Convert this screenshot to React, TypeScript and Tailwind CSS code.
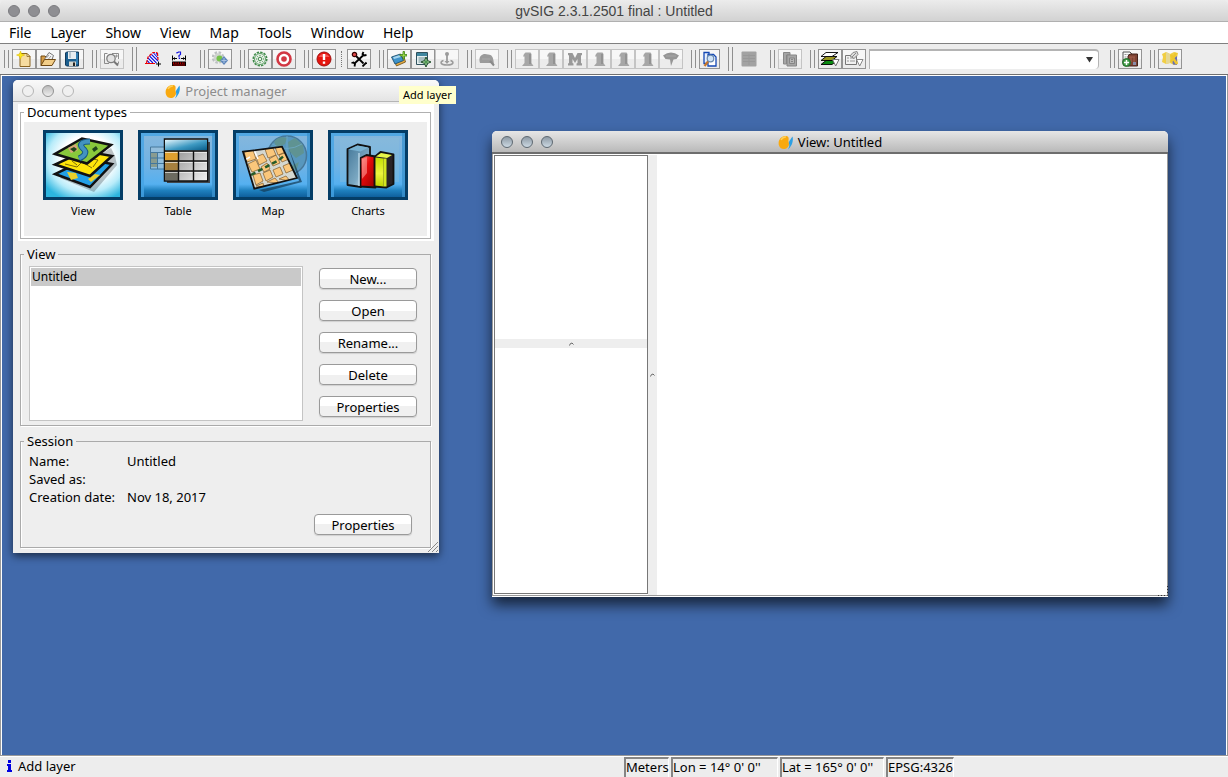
import React from 'react';

const MENUS = ['File', 'Layer', 'Show', 'View', 'Map', 'Tools', 'Window', 'Help'];

const Icon = ({ children }: { children: React.ReactNode }) => (
    <svg width="16" height="16" viewBox="0 0 16 16" fill="none" aria-hidden="true">{children}</svg>
);

/* ---------- toolbar icons ---------- */

const NewIcon = () => (
    <Icon>
        <path d="M4 2.500h7l3 3v10H4z" fill="#f6dca0" stroke="#8a6420" />
        <path d="M11 2.500v3h3z" fill="#fff3cf" stroke="#8a6420" strokeWidth=".8" />
        <path d="M4.500 0l1 3 3.200 1-3.200 1.200-1 3-1-3L.5 4l3-1z" fill="#ffe817" stroke="#d9b800" strokeWidth=".5" />
    </Icon>
);

const OpenIcon = () => (
    <Icon>
        <path d="M1 14.500V5h4l1.500 1.500H12V14z" fill="#d69c45" stroke="#6f4813" />
        <path d="M4 9l5-7.500 4.500 3L11 11z" fill="#f4f4f4" stroke="#666" strokeWidth=".9" />
        <path d="M6.500 7l2.500-3M8.500 8l2.500-3" stroke="#888" strokeWidth=".8" />
        <path d="M1 14.500l3.500-6H15.500l-3.500 6z" fill="#f3ce88" stroke="#6f4813" />
    </Icon>
);

const SaveIcon = () => (
    <Icon>
        <path d="M1.500 2l1-1h12v14h-12l-1-1z" fill="#1c5f8f" stroke="#123a5c" />
        <path d="M4 1h8v7H4z" fill="#e7edf2" />
        <path d="M5 1h2v6H5z" fill="#b8c6d0" />
        <path d="M5 10.500h7V15H5z" fill="#d7d7cf" />
        <path d="M9 11.500h2V15H9z" fill="#222" />
        <path d="M13 2v11" stroke="#48a0da" />
    </Icon>
);

const ZoomFrameIcon = () => (
    <Icon>
        <path d="M5 12.500H.5v-10h3M8 2.500h6.500V8M14.500 10.500v2H12" stroke="#8c8c8c" />
        <circle cx="7" cy="7.500" r="4.200" fill="#e3e3e3" stroke="#7f7f7f" strokeWidth="1.300" />
        <path d="M10 10.500l4 4" stroke="#777" strokeWidth="2" />
        <path d="M11 5h3M12.500 3.500v3" stroke="#999" />
    </Icon>
);

const AreaIcon = () => (
    <Icon>
        <path d="M1.500 12L3 6l5-4.500h4.500L13.500 12z" fill="#fff" />
        <path d="M2 9.500L4.500 12M3 7l5 5M4.500 5l7 7M6.500 3.500l6.500 6.500M8.500 2l4.500 5M11 2l1.500 2" stroke="#1212dd" strokeWidth="1.100" />
        <path d="M1.500 12L3 6l5-4.500h4.500M12.500 2L13 9" stroke="#e00" strokeWidth="1.200" strokeDasharray="3 1" />
        <path d="M0 12.500h10" stroke="#e00" />
        <path d="M13.500 10.500v5M11 13h5" stroke="#000" />
    </Icon>
);

const DistanceIcon = () => (
    <Icon>
        <path d="M6 2.500V1.500h1L7.500 1h2v2.500L8 4.500V6M7.500 7h1v1" stroke="#1515e0" strokeWidth="1.200" />
        <path d="M1.500 4.500v5M14.500 4.500v5M2 7.500h4M10 7.500h4" stroke="#000" />
        <path d="M2 7.500l2-1.500v3zM14 7.500L12 6v3z" fill="#000" />
        <path d="M1 10.500h14V15H1z" fill="#000" />
        <path d="M2 12.200h12" stroke="#f00000" strokeWidth="1.300" strokeDasharray="1.300 1" />
        <path d="M2 14h12" stroke="#a00" />
    </Icon>
);

const GearNavIcon = () => (
    <Icon>
        <circle cx="6" cy="6.500" r="5" stroke="#bcc0c2" strokeWidth="2.500" strokeDasharray="2.400 1.520" />
        <circle cx="6" cy="6.500" r="4.200" fill="#cfd3cf" />
        <circle cx="7.500" cy="7.500" r="3" fill="#74c24a" />
        <path d="M12 5l4 4.500-4 4.500-4-4.500z" fill="#5e86bb" />
        <path d="M12 7v5M9.500 9.500h5" stroke="#a9c2e2" />
    </Icon>
);

const GreenGearIcon = () => (
    <Icon>
        <circle cx="8" cy="8" r="6.800" stroke="#3f8a49" strokeWidth="1.500" strokeDasharray="2.400 1.160" />
        <circle cx="8" cy="8" r="5.500" fill="#e4eee4" stroke="#4c9556" strokeWidth=".9" />
        <circle cx="8" cy="8" r="1.800" fill="#eee" stroke="#3f8a49" />
        <path d="M8 4v1M8 11v1M4 8h1M11 8h1M5.300 5.300l.6.6M10.700 5.300l-.6.6M5.300 10.700l.6-.6M10.700 10.700l-.6-.6" stroke="#3f8a49" />
    </Icon>
);

const TargetIcon = () => (
    <Icon>
        <circle cx="8" cy="8" r="6.500" fill="#fff" stroke="#d23743" strokeWidth="2.600" />
        <circle cx="8" cy="8" r="2.800" fill="#d23743" />
    </Icon>
);

const AlertIcon = () => (
    <Icon>
        <circle cx="8" cy="8" r="7" fill="#e5150e" stroke="#a01010" />
        <path d="M2.500 6a6 5 0 0 1 11 0z" fill="#f77" opacity=".65" />
        <path d="M8 3v6" stroke="#fff" strokeWidth="2.400" />
        <path d="M8 10.500v2.300" stroke="#fff" strokeWidth="2.400" />
    </Icon>
);

const WrenchIcon = () => (
    <Icon>
        <path d="M4 4l8.500 8.500" stroke="#000" strokeWidth="1.800" />
        <path d="M12 4.500L3.500 12.500" stroke="#000" strokeWidth="1.800" />
        <path d="M12.500 1l-1 2 1.500 1.500 2.500-.5M.5 12l2-.5L4 13l-.5 2.500" stroke="#000" strokeWidth="1.800" />
        <circle cx="3.500" cy="3.500" r="2.200" fill="#e04a4a" stroke="#300" strokeWidth="1.200" />
        <path d="M11.500 15.500l4-4" stroke="#000" strokeWidth="1.800" />
    </Icon>
);

const AddLayerIcon = () => (
    <Icon>
        <path d="M3 9l10-3 1.500 5-9 4z" fill="#e8ad43" stroke="#6b4a12" strokeWidth=".8" />
        <path d="M.5 6l9-3 3 6.500-8.500 3.500z" fill="#3e92c9" stroke="#20506f" strokeWidth=".9" />
        <path d="M2 6.300l7-2.300 1 2L3 8z" fill="#a5d5ef" />
        <path d="M12 .5h1.500v3H16V5h-2.500v3H12V5H9V3.500h3z" fill="#a3e04c" stroke="#3f8416" strokeWidth=".8" />
    </Icon>
);

const AddTableIcon = () => (
    <Icon>
        <path d="M1.500 1.500h11v12h-11z" fill="#e5eff0" stroke="#31525e" />
        <path d="M2 2h10v3H2z" fill="#4087a0" />
        <path d="M3.500 7h7M3.500 9h7M3.500 11h7" stroke="#6d8c93" />
        <path d="M11 6l1.500 3.500L16 11l-3.500 1.500L11 16l-1.500-3.500L6 11l3.500-1.500z" fill="#b6dcae" stroke="#1f4d2a" />
        <path d="M11 9v4M9 11h4" stroke="#2c8034" />
    </Icon>
);

const AnchorIcon = () => (
    <Icon>
        <path d="M8 4v7" stroke="#9b9b9b" strokeWidth="1.800" />
        <path d="M4.500 9.500C1 10.500.5 14 8 14s7-3.500 3.500-4.500" stroke="#9b9b9b" strokeWidth="1.500" />
        <circle cx="8" cy="3" r="2" fill="#9b9b9b" />
        <path d="M5.500 10h5L8 13z" fill="#9b9b9b" />
    </Icon>
);

const SearchHatIcon = () => (
    <Icon>
        <path d="M.5 10C0 5 3 3 6 3l3 .5c4 0 5 3 5.500 6l.5 5-3-2.500H1z" fill="#9b9b9b" />
        <path d="M11 10l4 4.500" stroke="#8a8a8a" strokeWidth="2" />
        <path d="M3 8h8" stroke="#ababab" />
    </Icon>
);

const PawnIcon = () => (
    <Icon>
        <path d="M6.500 1.500h5L12.500 3v9l2 3H3l2.500-3V5.500H4L5 3z" fill="#a6a6a6" />
        <path d="M11 3v10" stroke="#929292" strokeWidth="2" />
    </Icon>
);

const CastleIcon = () => (
    <Icon>
        <path d="M1 2h4.500L8 7l2.500-5H15v2l-1 .5V12l1 .5V14.500H9.500v-2l1-.5V8L8 12 5.500 8v4l1 .5v2H1v-2l1-.5V4.500L1 4z" fill="#999" />
    </Icon>
);

const FunnelIcon = () => (
    <Icon>
        <path d="M0 4.500q8-6 16 0L13.500 8l-3 .5L8 15l-1-6.500L2.500 8z" fill="#969696" />
        <path d="M3 5h10" stroke="#a8a8a8" />
    </Icon>
);

const FindPageIcon = () => (
    <Icon>
        <path d="M2 1.500h5v11H2z" fill="#e9f0fc" stroke="#1448b4" strokeWidth="1.300" />
        <path d="M6 3.500h5.500L14 6v9H6z" fill="#fff" stroke="#1448b4" strokeWidth="1.300" />
        <circle cx="8.500" cy="7.500" r="3.300" fill="#cfe3f7" stroke="#6889b0" strokeWidth="1.200" />
        <path d="M6 10.500L2.500 15" stroke="#c7762a" strokeWidth="2.200" />
    </Icon>
);

const GrayTableIcon = () => (
    <Icon>
        <rect x=".5" y=".5" width="15" height="15" rx="1" fill="#a2a2a2" />
        <path d="M2 4.500h12M2 7.500h12M2 10.500h12M8 3v11" stroke="#989898" />
    </Icon>
);

const CopyIcon = () => (
    <Icon>
        <path d="M1.500 1.500H8V4H4.500v9h-3z" fill="#a5a5a5" stroke="#888" />
        <path d="M5 4h9.500v11H5z" fill="#a6a6a6" stroke="#858585" />
        <path d="M7.500 7h5v5.500h-5z" fill="#b5b5b5" stroke="#858585" />
        <path d="M9 8.500h2M9 10.500h2" stroke="#858585" />
    </Icon>
);

const StackIcon = () => (
    <svg width="20" height="18" viewBox="0 0 20 18" aria-hidden="true">
        <path d="M1 14.500l5-4h11l-5 4z" fill="#0a8a12" stroke="#000" strokeWidth=".9" />
        <path d="M1 10.500L6 6.500h11l-5 4z" fill="#97941e" stroke="#000" strokeWidth=".9" />
        <path d="M1 6.500L6 2.500h12l-6 4z" fill="#fff" stroke="#000" strokeWidth=".9" />
        <path d="M12.500 9.500H19L15.700 16z" fill="#fff" stroke="#777" />
    </svg>
);

const FormIcon = () => (
    <svg width="20" height="18" viewBox="0 0 20 18" fill="none" aria-hidden="true">
        <path d="M1.500 5.500h11v9h-11z" fill="#f1f1f1" stroke="#777" />
        <path d="M3 8h2M6 8h5M3 11h2M6 11h5" stroke="#999" />
        <path d="M6 6l3-3.500 4-1 1 3-4 4z" fill="#ddd" stroke="#888" />
        <path d="M8 7l4-4" stroke="#888" />
        <path d="M12.500 9.500H19L15.700 16z" fill="#fff" stroke="#888" />
    </svg>
);

const AddBoxIcon = () => (
    <Icon>
        <path d="M1 1h7l2 2v9H1z" fill="#fafafa" stroke="#555" />
        <path d="M2.500 3.500h2M5.500 3.500h2M2.500 6h2" stroke="#999" />
        <path d="M6 5l2-2h7.500v12H6z" fill="#7e4333" stroke="#44231b" />
        <path d="M7 6h6M9 6v5M12 6v5" stroke="#a5604e" />
        <path d="M11 11h3v3h-3z" fill="#888ca8" />
        <circle cx="4.500" cy="11.500" r="4" fill="#3f9a45" stroke="#226a2a" />
        <path d="M4.500 9v5M2 11.500h5" stroke="#fff" strokeWidth="1.500" />
    </Icon>
);

const MapPieceIcon = () => (
    <Icon>
        <path d="M0 3l4-2 4 2 4-2 4 1-1 5 1 6-4 1-4-2-4 1-4-2 1-5z" fill="#f1ce43" />
        <path d="M4 1l4 2v9l-4 1z" fill="#e5d794" />
        <path d="M10 9l5-4v9l-4-.5z" fill="#6870b5" />
        <path d="M9 4l6 9M14 2l-5 9" stroke="#edc62e" strokeWidth="2.500" />
    </Icon>
);

/* ---------- document type pictures ---------- */

const ViewPicture = () => (
    <svg viewBox="0 0 74 64" className="h-full w-full" aria-hidden="true">
        <defs>
            <radialGradient id="viewGlow" cx=".55" cy=".4" r=".7">
                <stop offset=".5" stopColor="#fff" />
                <stop offset=".75" stopColor="#b8ecfa" />
                <stop offset="1" stopColor="#2cb5df" />
            </radialGradient>
        </defs>
        <path d="M0 0h74v64H0z" fill="url(#viewGlow)" />
        <path d="M14 45l34 14 23-27-2-9-4-8z" fill="#405058" opacity=".35" />
        <path d="M9 41l35 13 22-23-26-5z" fill="#22a0e6" stroke="#111" strokeWidth="2.500" />
        <path d="M21 39l9 1 2 5-7 2zM42 46l7-5 5 1-9 7z" fill="#ead02a" />
        <path d="M9 31.500L44 43l22-20-28-5z" fill="#ffe50a" stroke="#111" strokeWidth="2.500" />
        <path d="M19 31l12 3 5-5 10 6M42 25l10 2-5 7M26 28l5 4" fill="none" stroke="#7c6b0a" />
        <path d="M9 21L41 30.500 65 12 36 5.500z" fill="#89c83c" stroke="#111" strokeWidth="2.500" />
        <path d="M22 15l8-4 2 6-7 3z" fill="#d8a37a" />
        <path d="M44 8.500c-9 0-11 3-7 7 5 4 1 8-4 10" fill="none" stroke="#145785" strokeWidth="6" />
        <path d="M44 8.500c-9 0-11 3-7 7 5 4 1 8-4 10" fill="none" stroke="#4393c0" strokeWidth="4" />
        <path d="M24 16l4-2 3 2-3 3zM46 16l4-3 2 3-4 3z" fill="#20451c" />
    </svg>
);

const BlueGround = ({ id }: { id: string }) => (
    <>
        <defs>
            <linearGradient id={id} x1="0" y1="0" x2="0" y2="1">
                <stop offset="0" stopColor="#86b7dc" />
                <stop offset=".5" stopColor="#70b2e4" />
                <stop offset=".8" stopColor="#55b0f0" />
                <stop offset=".9" stopColor="#1e7fbd" />
                <stop offset="1" stopColor="#0e5f9c" />
            </linearGradient>
        </defs>
        <path d="M0 0h74v64H0z" fill={`url(#${id})`} />
        <path d="M0 0h74v3H0zM0 0h3v64H0z" fill="#45a4e5" opacity=".8" />
        <path d="M71 0h3v64h-3z" fill="#3b93cf" opacity=".8" />
    </>
);

const TablePicture = () => (
    <svg viewBox="0 0 74 64" className="h-full w-full" aria-hidden="true">
        <BlueGround id="tableGround" />
        <defs>
            <linearGradient id="tableHead" x1="0" y1="0" x2="1" y2="1">
                <stop offset="0" stopColor="#e2f4fb" />
                <stop offset=".55" stopColor="#3d99c2" />
                <stop offset="1" stopColor="#075b88" />
            </linearGradient>
            <linearGradient id="tableCell" x1="0" y1="0" x2="1" y2="1">
                <stop offset="0" stopColor="#9c9c9c" />
                <stop offset="1" stopColor="#f0f0f0" />
            </linearGradient>
        </defs>
        <g opacity=".55">
            <path d="M9.500 14h15v22h-15z" fill="#a8c7d9" stroke="#1d4867" />
            <path d="M10 20h6v14h-6z" fill="#9a8a4e" />
            <path d="M10 19.500h14M10 25h14M10 30.500h14M16.500 19v17" stroke="#1d4867" />
        </g>
        <path d="M26 9h43v41H26z" fill="#40464c" />
        <path d="M23.500 6h43v42h-43z" fill="#d5d5d5" stroke="#111" strokeWidth="1.500" />
        <path d="M24 7h42v10.500H24z" fill="url(#tableHead)" />
        <path d="M24 18h13v10H24z" fill="#dfa02f" />
        <path d="M24 28h13v10H24z" fill="#a6803f" />
        <path d="M24 38h13v9H24z" fill="#6c6b60" />
        <path d="M38 18h14v10H38zM38 28h14v10H38zM38 38h14v9H38zM53 18h13v10H53zM53 28h13v10H53zM53 38h13v9H53z" fill="url(#tableCell)" />
        <path d="M24 19.500h42M24 29.500h42M24 39.500h42" stroke="#fff" opacity=".6" />
        <path d="M24 18h43M24 28h43M24 38h43M37.500 18v30M52.500 18v30" stroke="#111" strokeWidth="1.400" />
    </svg>
);

const MapPicture = () => (
    <svg viewBox="0 0 74 64" className="h-full w-full" aria-hidden="true">
        <BlueGround id="mapGround" />
        <circle cx="51" cy="22.500" r="19.500" fill="#5897bd" stroke="#477899" strokeWidth="1.500" />
        <path d="M38 9c4-6 10-5 13-4l-2 6-8 4zM52 9l7-4 8 7 1 8-8 5-7-7zM55 33l8-4-3 9z" fill="#5f9392" />
        <path d="M51 3v38M36 11q15 9 30 0" fill="none" stroke="#6faac7" strokeWidth=".8" />
        <path d="M23 57l40-9-10-32 13 33-38 10z" fill="#123851" opacity=".7" />
        <clipPath id="mapSheet"><path d="M7 18.700l39-5L61 45 18.300 55.700z" /></clipPath>
        <g clipPath="url(#mapSheet)">
            <path d="M0 0h74v64H0z" fill="#d4d7d0" />
            <g fill="#fbc77b" stroke="#8b6838" strokeWidth=".8">
                <path d="M8 19l9-2 3 9-9 3zM20 24l7-3 4 7-8 4zM29 16l8-1 3 7-8 3zM39 14l7-1 3 7-7 2zM12 31l8-4 4 9-8 3zM33 26l7-4 4 8-7 3zM43 22l6-3 4 7-7 3zM25 34l6-4 3 6-6 3zM17 42l7-2 3 8-7 4zM27 40l7-3 3 7-7 4zM37 37l7-3 3 7-7 3zM47 33l7-3 3 7-7 3zM20 53l7-3 1 4zM31 49l8-4 4 5zM43 46l7-3 4 5z" />
            </g>
            <path d="M15 42l28-15 6-5" fill="none" stroke="#255b28" strokeWidth="2.500" strokeDasharray="5 3" />
            <path d="M7 28l7-4M18 17l4 9" stroke="#fff" strokeWidth="1.500" />
        </g>
        <path d="M7 18.700l39-5L61 45 18.300 55.700z" fill="none" stroke="#111" strokeWidth="1.800" />
    </svg>
);

const ChartsPicture = () => (
    <svg viewBox="0 0 74 64" className="h-full w-full" aria-hidden="true">
        <BlueGround id="chartGround" />
        <defs>
            <linearGradient id="barBlue" x1="0" y1="0" x2="1" y2="1">
                <stop offset="0" stopColor="#427698" />
                <stop offset=".6" stopColor="#7ba8c2" />
                <stop offset="1" stopColor="#e9f4f8" />
            </linearGradient>
            <linearGradient id="barRed" x1="0" y1="0" x2="1" y2="1">
                <stop offset="0" stopColor="#ff8078" />
                <stop offset=".4" stopColor="#e50b0b" />
                <stop offset="1" stopColor="#930000" />
            </linearGradient>
            <linearGradient id="barYellow" x1="0" y1="0" x2="0" y2="1">
                <stop offset="0" stopColor="#c3de00" />
                <stop offset=".55" stopColor="#edf43e" />
                <stop offset="1" stopColor="#bed400" />
            </linearGradient>
        </defs>
        <path d="M9 5h59v44H9z" fill="#8dbdd9" opacity=".4" />
        <g stroke="#111" strokeWidth="1.800" strokeLinejoin="round">
            <path d="M16.500 16l10-4.500 12.500 2.500v12l-9 28-13.500-2z" fill="url(#barBlue)" />
            <path d="M29.500 25l6-3 9 1.500v31l-15-1z" fill="url(#barRed)" />
            <path d="M43.500 24l6-5 13 2.500V51l-7 3.500-12-1z" fill="#292326" />
        </g>
        <path d="M17.500 16.500l9-4 11 2-8 4z" fill="#79b2d2" />
        <path d="M44.500 24.500l8 1v28l-8-1z" fill="url(#barYellow)" />
        <path d="M52.500 25.500l3 0v28l-3 0z" fill="#d4e620" />
        <path d="M45 23.500l5-3.500 11 2-5 3z" fill="#e7f64b" />
        <path d="M28 20v33" stroke="#c4dfee" strokeWidth="1.200" />
        <path d="M31 26l5-2v16l-5 6z" fill="#ffb7b1" opacity=".5" />
    </svg>
);

const DOCUMENT_TYPES = [
    { name: 'View', picture: <ViewPicture /> },
    { name: 'Table', picture: <TablePicture /> },
    { name: 'Map', picture: <MapPicture /> },
    { name: 'Charts', picture: <ChartsPicture /> },
];

const Logo = () => (
    <svg width="16" height="16" viewBox="0 0 16 16" aria-hidden="true">
        <path d="M7 1C10 .5 11 2 10.500 5c-.5 3 2 4-1 7.500-3 3-7.500 1.500-8.500-2C-.5 6 2.500 1.500 7 1z" fill="#f9a90f" />
        <path d="M3 5q2-3.500 5-3" stroke="#ffd15a" strokeWidth="1.500" fill="none" />
        <path d="M14.500 1.500c1 4 0 9-4.500 13 1.500-3 1.500-4 1-6s1-3 3.500-7z" fill="#2c9fe3" />
    </svg>
);

/* ---------- toolbar ---------- */

const Grip = ({ tall = false }: { tall?: boolean }) => (
    <div className={`w-[5px] shrink-0 border-x border-[#8f8f8f] ${tall ? 'h-6' : 'h-[18px]'}`} />
);

const Group = ({ tall, children }: { tall?: boolean, children: React.ReactNode }) => (
    <div className="flex shrink-0 items-center gap-[3px]">
        <Grip tall={tall} />
        <div className="flex items-center">{children}</div>
    </div>
);

interface ToolProps {
    label: string;
    children: React.ReactNode;
    disabled?: boolean;
    className?: string;
}

const Tool = ({ label, children, disabled, className = 'w-6' }: ToolProps) => (
    <button
        aria-label={label}
        disabled={disabled}
        className={`flex h-5 shrink-0 items-center justify-center border bg-gradient-to-b from-[#f7f7f7] from-50% to-[#ececec] to-50% ${disabled ? 'border-[#c4c4c4]' : 'border-[#949494]'} ${className}`}
    >
        {children}
    </button>
);

const FlatTool = ({ label, children }: ToolProps) => (
    <button aria-label={label} className="flex h-5 w-[26px] shrink-0 items-center justify-center">{children}</button>
);

const Toolbar = () => (
    <div className="flex h-[31px] shrink-0 items-center gap-2 overflow-hidden border-b border-[#707070] bg-[#ededed] pl-1">
        <Group>
            <Tool label="New project"><NewIcon /></Tool>
            <Tool label="Open project"><OpenIcon /></Tool>
            <Tool label="Save project"><SaveIcon /></Tool>
        </Group>
        <Group><Tool label="Zoom" disabled><ZoomFrameIcon /></Tool></Group>
        <Group tall>
            <FlatTool label="Area"><AreaIcon /></FlatTool>
            <FlatTool label="Distance"><DistanceIcon /></FlatTool>
        </Group>
        <Group><Tool label="Navigate"><GearNavIcon /></Tool></Group>
        <Group>
            <Tool label="Geoprocess"><GreenGearIcon /></Tool>
            <Tool label="Locate"><TargetIcon /></Tool>
        </Group>
        <Group>
            <Tool label="Errors"><AlertIcon /></Tool>
            <div className="mx-[5px] h-4 border-l border-dotted border-[#777]" />
            <Tool label="Preferences"><WrenchIcon /></Tool>
        </Group>
        <Group>
            <Tool label="Add layer"><AddLayerIcon /></Tool>
            <Tool label="Add table"><AddTableIcon /></Tool>
            <Tool label="Anchor" disabled><AnchorIcon /></Tool>
        </Group>
        <Group><Tool label="Search" disabled><SearchHatIcon /></Tool></Group>
        <Group>
            <Tool label="Insert point" disabled><PawnIcon /></Tool>
            <Tool label="Insert line" disabled><PawnIcon /></Tool>
            <Tool label="Insert multipoint" disabled><CastleIcon /></Tool>
            <Tool label="Insert curve" disabled><PawnIcon /></Tool>
            <Tool label="Insert arc" disabled><PawnIcon /></Tool>
            <Tool label="Insert polygon" disabled><PawnIcon /></Tool>
            <Tool label="Filter" disabled><FunnelIcon /></Tool>
        </Group>
        <Group><Tool label="Find" className="w-[21px]"><FindPageIcon /></Tool></Group>
        <Group tall><FlatTool label="Table"><GrayTableIcon /></FlatTool></Group>
        <Group><Tool label="Copy" disabled><CopyIcon /></Tool></Group>
        <Group>
            <Tool label="Layers"><StackIcon /></Tool>
            <Tool label="Form"><FormIcon /></Tool>
            <div className="relative mx-[3px] h-5 w-[230px]">
                <select aria-label="Layer selection" className="block h-full w-full appearance-none rounded-r border border-b-0 border-t-2 border-[#b4b4b4] bg-white text-[13px]" />
                <svg className="pointer-events-none absolute right-[6px] top-2" width="7" height="6" viewBox="0 0 7 6" aria-hidden="true"><path d="M0 0h7L3.500 5.500z" fill="#333" /></svg>
            </div>
        </Group>
        <Group><Tool label="Add resource"><AddBoxIcon /></Tool></Group>
        <Group><Tool label="Base map"><MapPieceIcon /></Tool></Group>
    </div>
);

/* ---------- windows ---------- */

const PushButton = ({ children }: { children: React.ReactNode }) => (
    <button className="h-[21px] w-[98px] rounded-[4px] border border-[#9a9a9a] bg-gradient-to-b from-white from-50% to-[#f0f0f0] to-50% text-[13px] leading-4 shadow-[0_1px_1px_#d0d0d0]">
        {children}
    </button>
);

const InfoRow = ({ label, value }: { label: string, value: string }) => (
    <div className="flex h-[18px]">
        <dt className="w-[98px]">{label}</dt>
        <dd>{value}</dd>
    </div>
);

const ProjectManager = () => (
    <section className="absolute left-[11px] top-1 flex w-[426px] flex-col rounded-t-[5px] bg-[#eee] pb-[5px] shadow-[0_3px_8px_rgba(0,0,0,0.6)]">
        <header className="relative flex h-[22px] items-center justify-center rounded-t-[5px] border-b border-[#b5b5b5] bg-gradient-to-b from-[#fafafa] to-[#e4e4e4]">
            <div className="absolute left-[9px] flex gap-2">
                <button aria-label="Close" className="h-3 w-3 rounded-full border border-[#b5b5b5] bg-[#f0f0f0]" />
                <button aria-label="Minimize" className="h-3 w-3 rounded-full border border-[#929292] bg-gradient-to-b from-[#bbb] to-[#eee]" />
                <button aria-label="Maximize" className="h-3 w-3 rounded-full border border-[#b5b5b5] bg-[#f0f0f0]" />
            </div>
            <h2 className="flex items-center gap-1 pt-[2px] text-[13px] text-[#8c8c8c]"><Logo />Project manager</h2>
        </header>

        <div className="mx-[5px] mt-[2px] bg-white pb-[2px] pl-[2px] pr-[3px]">
            <fieldset className="border border-[#b0b0b0] px-[3px] pb-[2px] pt-[2px]">
                <legend className="px-[3px] text-[13px] leading-4">Document types</legend>
                <div className="flex h-[114px] gap-[15px] bg-[#eee] pl-[19px] pt-2">
                    {DOCUMENT_TYPES.map((type) => (
                        <button key={type.name} className="flex w-20 flex-col items-center gap-[3px] text-[11px] leading-[15px]">
                            <span className="h-[70px] w-full border-[3px] border-[#043d66]">{type.picture}</span>
                            {type.name}
                        </button>
                    ))}
                </div>
            </fieldset>
        </div>

        <fieldset className="ml-[7px] mr-2 mt-[5px] border border-[#aaa] px-2 pb-1 shadow-[inset_1px_0_#fff,1px_1px_#fff]">
            <legend className="-ml-[5px] px-[3px] text-[13px] leading-4">View</legend>
            <div className="flex gap-4 pt-1">
                <ul role="listbox" aria-label="Views" className="h-[155px] w-[274px] border border-[#c4c4c4] bg-white p-px text-xs leading-[18px]">
                    <li role="option" aria-selected="true" className="bg-[#c9c9c9] pl-px">Untitled</li>
                </ul>
                <div className="flex flex-col gap-[11px] pt-[2px]">
                    <PushButton>New...</PushButton>
                    <PushButton>Open</PushButton>
                    <PushButton>Rename...</PushButton>
                    <PushButton>Delete</PushButton>
                    <PushButton>Properties</PushButton>
                </div>
            </div>
        </fieldset>

        <fieldset className="ml-[7px] mr-2 mt-[7px] border border-[#aaa] px-2 pb-3 shadow-[inset_1px_0_#fff,1px_1px_#fff]">
            <legend className="-ml-[5px] px-[3px] text-[13px] leading-4">Session</legend>
            <dl className="pt-[3px] text-[13px] leading-[18px]">
                <InfoRow label="Name:" value="Untitled" />
                <InfoRow label="Saved as:" value="" />
                <InfoRow label="Creation date:" value="Nov 18, 2017" />
            </dl>
            <div className="flex justify-end pr-[10px] pt-2"><PushButton>Properties</PushButton></div>
        </fieldset>
        <svg className="absolute bottom-0 right-0" width="12" height="12" viewBox="0 0 12 12" aria-hidden="true">
            <path d="M1 11L11 1M5 11l6-6M9 11l2-2" stroke="#888" />
        </svg>
    </section>
);

const SplitMark = () => (
    <svg width="5" height="4" viewBox="0 0 5 4" fill="none" aria-hidden="true">
        <path d="M.5 3.500Q1 1 3 1l1.500 1.500" stroke="#666" />
    </svg>
);

const ViewWindow = () => (
    <section className="absolute left-[490px] top-[55px] flex h-[466px] w-[676px] flex-col rounded-t-[5px] bg-white shadow-[0_8px_14px_rgba(0,0,0,0.65)]">
        <header className="relative flex h-[23px] shrink-0 items-center justify-center rounded-t-[5px] border-b-2 border-[#6d6d6d] bg-gradient-to-b from-[#e6e6e6] to-[#b9b9b9]">
            <div className="absolute left-[9px] flex gap-2">
                <button aria-label="Close" className="h-3 w-3 rounded-full border border-[#5d6871] bg-gradient-to-b from-[#8e9aa5] to-[#ccd9e3]" />
                <button aria-label="Minimize" className="h-3 w-3 rounded-full border border-[#5d6871] bg-gradient-to-b from-[#8e9aa5] to-[#ccd9e3]" />
                <button aria-label="Maximize" className="h-3 w-3 rounded-full border border-[#5d6871] bg-gradient-to-b from-[#8e9aa5] to-[#ccd9e3]" />
            </div>
            <h2 className="flex items-center gap-1 pt-[2px] text-[13px]"><Logo />View: Untitled</h2>
        </header>
        <div className="flex flex-1 border-x border-b border-[#999] pl-px pt-px">
            <div className="mb-px flex w-[154px] flex-col border border-[#777]">
                <div className="h-[183px]" />
                <div className="flex h-[9px] items-center justify-center bg-[#eee]"><SplitMark /></div>
            </div>
            <div className="flex w-[9px] items-center justify-center bg-[#eee]"><SplitMark /></div>
        </div>
        <div className="h-px" />
        <svg className="absolute bottom-px right-0" width="10" height="10" viewBox="0 0 10 10" fill="none" aria-hidden="true">
            <path d="M0 9.500h9.500V0" stroke="#333" strokeDasharray="1 2" />
        </svg>
    </section>
);

const StatusField = ({ width, children }: { width: string, children: React.ReactNode }) => (
    <div className={`shrink-0 whitespace-nowrap border-l-2 border-r border-t-2 border-l-[#858585] border-r-white border-t-[#858585] text-[13px] leading-4 ${width}`}>
        {children}
    </div>
);

export default function App() {
    return (
        <div className="flex h-screen flex-col overflow-hidden bg-[#ededed] font-['Lucida_Grande','Noto_Sans',sans-serif] text-black">
            <header className="relative flex h-[22px] shrink-0 items-center justify-center rounded-t-[5px] border-b border-[#b0b0b0] bg-gradient-to-b from-[#ececec] to-[#d2d2d2]">
                <div className="absolute left-2 flex gap-2">
                    <button aria-label="Close" className="h-3 w-3 rounded-full border border-[#7c7c80] bg-[#8e8e92]" />
                    <button aria-label="Minimize" className="h-3 w-3 rounded-full border border-[#7c7c80] bg-[#8e8e92]" />
                    <button aria-label="Maximize" className="h-3 w-3 rounded-full border border-[#7c7c80] bg-[#8e8e92]" />
                </div>
                <h1 className="pt-px font-['Liberation_Sans',sans-serif] text-sm text-[#444]">gvSIG 2.3.1.2501 final : Untitled</h1>
            </header>

            <nav className="flex h-[22px] shrink-0 items-center gap-px border-b border-[#808080] bg-white text-sm">
                {MENUS.map((menu) => (
                    <button key={menu} className="px-[9px] leading-5">{menu}</button>
                ))}
            </nav>

            <Toolbar />

            <main className="relative flex-1 border-x border-b border-[#999] bg-white px-px pt-px">
                <div className="relative h-full overflow-hidden bg-[#4169aa]">
                    <ProjectManager />
                    <ViewWindow />
                    <div role="tooltip" className="absolute left-[397px] top-[10px] bg-[#ffffcc] px-1 text-[11px] leading-[18px]">Add layer</div>
                </div>
            </main>

            <footer className="flex h-[21px] shrink-0 gap-[2px] border-t border-white">
                <p className="flex min-w-0 flex-1 items-center gap-[6px] pb-[3px] pl-[7px] text-[13px] leading-4">
                    <svg width="5" height="12" viewBox="0 0 5 12" aria-hidden="true">
                        <path d="M1 0h3v3H1zM0 4h4v6h1v2H0v-2h1V6H0z" fill="#0000e0" />
                    </svg>
                    Add layer
                </p>
                <StatusField width="w-[45px]">Meters</StatusField>
                <StatusField width="w-[107px]">Lon = 14° 0' 0''</StatusField>
                <StatusField width="w-[104px]">Lat = 165° 0' 0''</StatusField>
                <StatusField width="w-[68px]">EPSG:4326</StatusField>
                <div className="w-[272px] shrink-0" />
            </footer>
        </div>
    );
}
